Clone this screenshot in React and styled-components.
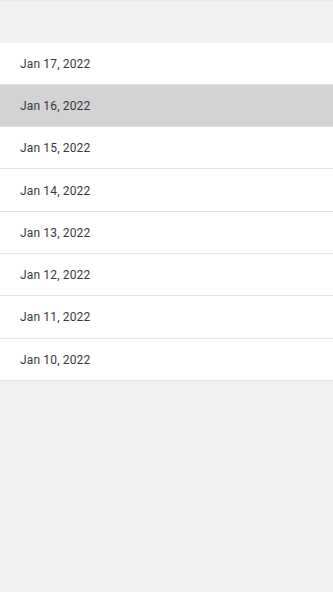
import React from 'react';
import styled, { createGlobalStyle } from 'styled-components';

const GlobalStyle = createGlobalStyle`
    html, body {
        margin: 0;
        padding: 0;
        background: #f2f0f3;
    }
    body {
        font-family: Roboto, 'Noto Sans', sans-serif;
    }
`;

const Screen = styled.div`
    width: 333px;
    height: 592px;
    background: #f2f0f3;
    box-shadow: inset 0 2px 2px -1px rgba(0, 0, 0, 0.05);
    padding-top: 42.5px;
    box-sizing: border-box;
    overflow: hidden;
`;

const List = styled.ul`
    list-style: none;
    margin: 0;
    padding: 0;
    display: flex;
    flex-direction: column;
`;

const Row = styled.li`
    height: 42.3px;
    box-sizing: border-box;
    display: flex;
    align-items: center;
    padding: 1px 20px 0;
    background: ${(p) => (p.selected ? '#d3d2d4' : '#ffffff')};
    border-bottom: 1px solid #e4e2e5;
    font-size: 12px;
    color: #383838;
    letter-spacing: 0.15px;
`;

const dates = [
    'Jan 17, 2022',
    'Jan 16, 2022',
    'Jan 15, 2022',
    'Jan 14, 2022',
    'Jan 13, 2022',
    'Jan 12, 2022',
    'Jan 11, 2022',
    'Jan 10, 2022',
];

export default function App() {
    return (
        <>
            <GlobalStyle />
            <Screen>
                <List>
                    {dates.map((d, i) => (
                        <Row key={d} selected={i === 1}>
                            {d}
                        </Row>
                    ))}
                </List>
            </Screen>
        </>
    );
}
